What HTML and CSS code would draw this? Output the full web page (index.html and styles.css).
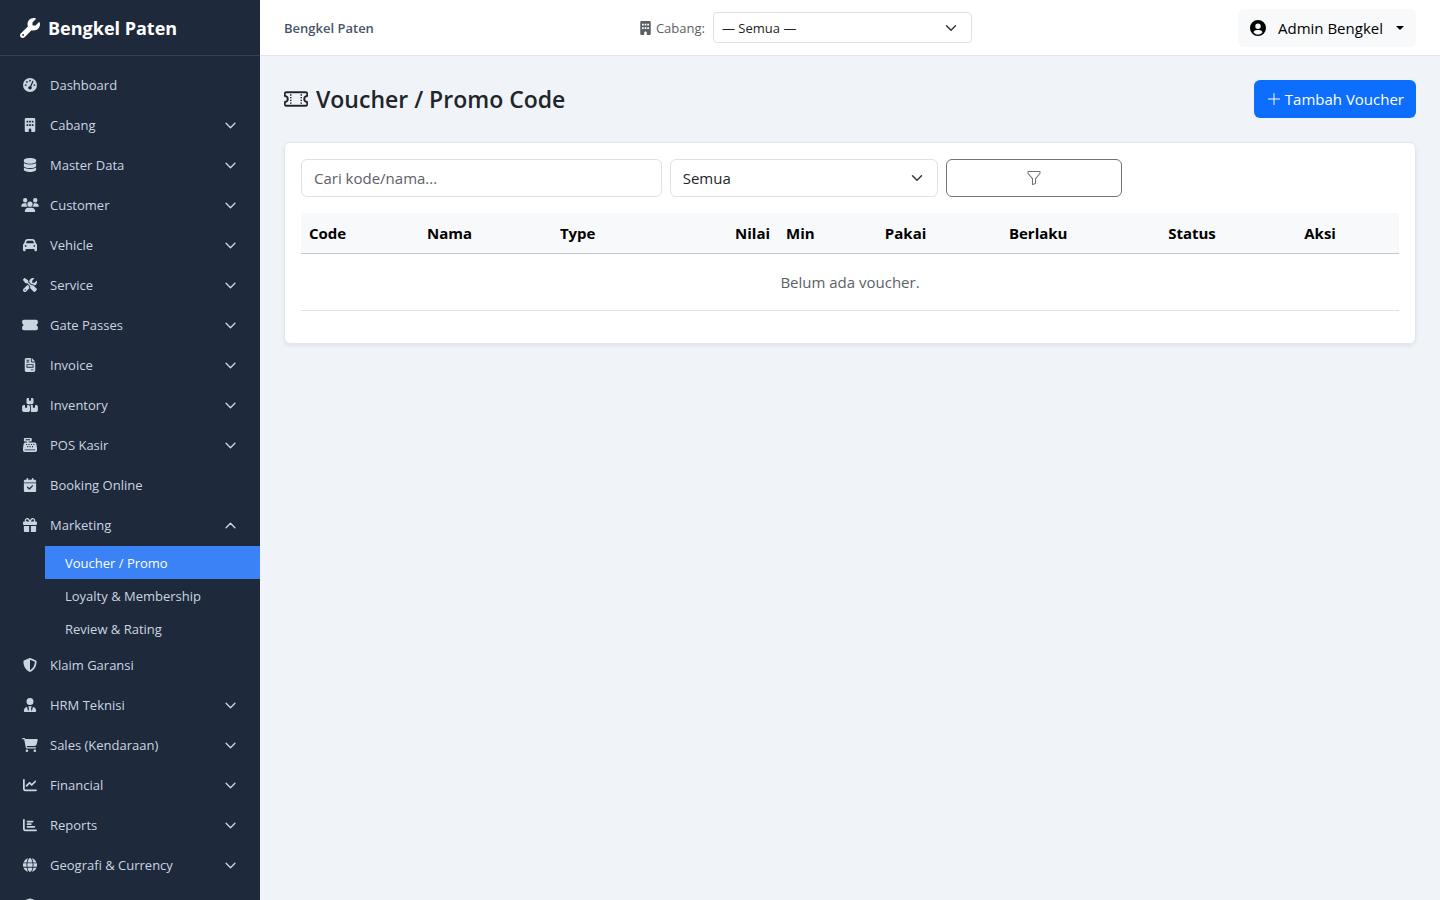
FILE: index.html
```html
<!DOCTYPE html>
<html lang="id">
<head>
    <meta charset="UTF-8">
    <meta name="viewport" content="width=device-width, initial-scale=1.0">
    <title>Voucher / Promo Code - Bengkel Paten</title>
    <link rel="stylesheet" href="styles.css">
</head>
<body>
    <!-- Ikon yang dipakai berulang -->
    <svg class="sprite" aria-hidden="true">
        <symbol id="chevron" viewBox="0 0 16 16">
            <path d="M1.6 4.8L8 11.2l6.4-6.4" fill="none" stroke="currentColor" stroke-width="2" stroke-linecap="round" stroke-linejoin="round"/>
        </symbol>
        <symbol id="building" viewBox="0 0 384 512">
            <path fill-rule="evenodd" d="M48 0C21 0 0 21 0 48V464c0 27 21 48 48 48h96V432c0-27 21-48 48-48s48 21 48 48v80h96c27 0 48-21 48-48V48c0-27-21-48-48-48zM64 96h64v64H64zM160 96h64v64h-64zM256 96h64v64h-64zM64 224h64v64H64zM160 224h64v64h-64zM256 224h64v64h-64z"/>
        </symbol>
    </svg>

    <div class="layout">
        <aside class="sidebar">
            <a href="#" class="brand">
                <svg class="brand-icon" viewBox="0 0 512 512"><path d="M352 320c88.400 0 160-71.600 160-160c0-15.300-2.200-30.100-6.200-44.200c-3.100-10.800-16.400-13.200-24.300-5.300l-76.800 76.800c-3 3-7.100 4.700-11.300 4.700H336c-8.800 0-16-7.200-16-16V118.600c0-4.200 1.700-8.300 4.700-11.300l76.800-76.800c7.900-7.900 5.400-21.200-5.300-24.300C382.100 2.200 367.300 0 352 0C263.600 0 192 71.600 192 160c0 19.100 3.400 37.500 9.500 54.500L19.900 396.100C7.200 408.800 0 426.100 0 444.100C0 481.600 30.400 512 67.900 512c18 0 35.300-7.200 48-19.900L297.500 310.500c17 6.200 35.400 9.500 54.500 9.500zM80 408a24 24 0 1 1 0 48 24 24 0 1 1 0-48z"/></svg>
                Bengkel Paten
            </a>
            <nav class="menu">
                <a href="#" class="menu-item">
                    <svg class="menu-icon" viewBox="0 0 512 512"><path fill-rule="evenodd" d="M256 0a256 256 0 1 1 0 512A256 256 0 1 1 256 0zM256 64a32 32 0 1 0 0 64 32 32 0 1 0 0-64zM144 112a32 32 0 1 0 0 64 32 32 0 1 0 0-64zM96 224a32 32 0 1 0 0 64 32 32 0 1 0 0-64zM416 224a32 32 0 1 0 0 64 32 32 0 1 0 0-64zM382 137c5-12 0-26-12-31s-26 0-31 12L263 288c-38 4-71 30-71 72 0 35 29 64 64 64s64-29 64-64c0-19-6-37-18-49z"/></svg>
                    <span>Dashboard</span>
                </a>
                <a href="#" class="menu-item">
                    <svg class="menu-icon"><use href="#building"/></svg>
                    <span>Cabang</span>
                    <svg class="arrow"><use href="#chevron"/></svg>
                </a>
                <a href="#" class="menu-item">
                    <svg class="menu-icon" viewBox="0 0 448 512"><path d="M448 80v48c0 44.200-100.300 80-224 80S0 172.200 0 128V80C0 35.800 100.300 0 224 0S448 35.800 448 80zM393.200 214.700c20.800-7.400 39.900-16.900 54.800-28.600V288c0 44.200-100.300 80-224 80S0 332.200 0 288V186.100c14.900 11.800 34 21.200 54.800 28.600C99.700 230.700 159.500 240 224 240s124.300-9.300 169.200-25.300zM0 346.100c14.900 11.800 34 21.200 54.800 28.600C99.700 390.700 159.500 400 224 400s124.300-9.300 169.200-25.300c20.800-7.400 39.900-16.900 54.800-28.600V432c0 44.200-100.300 80-224 80S0 476.200 0 432V346.100z"/></svg>
                    <span>Master Data</span>
                    <svg class="arrow"><use href="#chevron"/></svg>
                </a>
                <a href="#" class="menu-item">
                    <svg class="menu-icon" viewBox="0 0 640 512"><path d="M144 0a80 80 0 1 1 0 160A80 80 0 1 1 144 0zM512 0a80 80 0 1 1 0 160A80 80 0 1 1 512 0zM0 298.700C0 239.800 47.800 192 106.700 192h42.700c15.900 0 31 3.500 44.600 9.700c-1.300 7.200-1.900 14.700-1.900 22.300c0 38.200 16.800 72.500 43.300 96H21.300C9.600 320 0 310.400 0 298.700zM405.300 320c26.600-23.500 43.300-57.800 43.300-96c0-7.600-.7-15-1.900-22.300c13.600-6.300 28.700-9.700 44.600-9.700h42.700C592.200 192 640 239.800 640 298.700c0 11.800-9.600 21.300-21.300 21.300H405.300zM224 224a96 96 0 1 1 192 0 96 96 0 1 1-192 0zM128 485.300C128 411.700 187.700 352 261.300 352H378.700C452.300 352 512 411.700 512 485.300c0 14.700-11.900 26.700-26.700 26.700H154.700c-14.700 0-26.700-11.900-26.700-26.700z"/></svg>
                    <span>Customer</span>
                    <svg class="arrow"><use href="#chevron"/></svg>
                </a>
                <a href="#" class="menu-item">
                    <svg class="menu-icon" viewBox="0 0 512 512"><path d="M135.200 117.400L109.100 192H402.900l-26.100-74.600C372.300 104.600 360.200 96 346.600 96H165.400c-13.600 0-25.700 8.600-30.200 21.400zM39.600 196.800L74.800 96.300C88.300 57.800 124.600 32 165.400 32H346.600c40.800 0 77.100 25.800 90.600 64.300l35.200 100.500c23.200 9.600 39.600 32.500 39.600 59.200V448c0 17.700-14.300 32-32 32H448c-17.700 0-32-14.300-32-32V400H96v48c0 17.700-14.300 32-32 32H32c-17.700 0-32-14.300-32-32V256c0-26.700 16.400-49.600 39.600-59.200zM128 288a32 32 0 1 0-64 0 32 32 0 1 0 64 0zm288 32a32 32 0 1 0 0-64 32 32 0 1 0 0 64z"/></svg>
                    <span>Vehicle</span>
                    <svg class="arrow"><use href="#chevron"/></svg>
                </a>
                <a href="#" class="menu-item">
                    <svg class="menu-icon" viewBox="0 0 512 512"><path d="M78.600 5C69.100-2.400 55.600-1.500 47 7L7 47c-8.500 8.500-9.400 22-2.100 31.600l80 104c4.500 5.900 11.600 9.400 19 9.400h54.100l109 109c-14.700 29-10 65.400 14.300 89.600l112 112c12.500 12.500 32.800 12.500 45.300 0l64-64c12.500-12.500 12.500-32.800 0-45.300l-112-112c-24.200-24.200-60.600-29-89.600-14.300l-109-109V104c0-7.500-3.500-14.500-9.400-19L78.600 5zM19.900 396.100C7.200 408.800 0 426.100 0 444.100C0 481.600 30.400 512 67.900 512c18 0 35.300-7.200 48-19.900L233.700 374.300c-7.800-20.900-9-43.600-3.600-65.100l-61.700-61.700L19.900 396.100zM512 144c0-10.500-1.100-20.700-3.200-30.500c-2.400-11.200-16.100-14.100-24.200-6l-63.900 63.900c-3 3-7.100 4.700-11.300 4.700H352c-8.800 0-16-7.200-16-16V102.600c0-4.200 1.700-8.300 4.700-11.300l63.900-63.900c8.100-8.100 5.200-21.800-6-24.200C388.700 1.100 378.500 0 368 0C288.500 0 224 64.500 224 144l0 .8 85.300 85.300c36-9.100 75.800 .5 104 28.700L429 274.500c49-23 83-72.800 83-130.500zM56 432a24 24 0 1 1 48 0 24 24 0 1 1-48 0z"/></svg>
                    <span>Service</span>
                    <svg class="arrow"><use href="#chevron"/></svg>
                </a>
                <a href="#" class="menu-item">
                    <svg class="menu-icon" viewBox="0 0 576 512"><path d="M64 64C29 64 0 93 0 128v64c0 9 7 16 15 18 19 7 33 25 33 46s-14 39-33 46c-8 2-15 9-15 18v64c0 35 29 64 64 64H512c35 0 64-29 64-64v-64c0-9-7-16-15-18-19-7-33-25-33-46s14-39 33-46c8-2 15-9 15-18v-64c0-35-29-64-64-64z"/></svg>
                    <span>Gate Passes</span>
                    <svg class="arrow"><use href="#chevron"/></svg>
                </a>
                <a href="#" class="menu-item">
                    <svg class="menu-icon" viewBox="0 0 384 512"><path fill-rule="evenodd" d="M64 0C29 0 0 29 0 64V448c0 35 29 64 64 64H320c35 0 64-29 64-64V160H256c-18 0-32-14-32-32V0zM256 0V128H384zM64 64h96v32H64zM64 128h96v32H64zM64 224H320v128H64zM96 256v64H288v-64zM224 416h96v32h-96z"/></svg>
                    <span>Invoice</span>
                    <svg class="arrow"><use href="#chevron"/></svg>
                </a>
                <a href="#" class="menu-item">
                    <svg class="menu-icon" viewBox="0 0 576 512"><path d="M248 0H208c-27 0-48 21-48 48V160c0 35 29 64 64 64H352c35 0 64-29 64-64V48c0-27-21-48-48-48H328V80c0 9-7 16-16 16H264c-9 0-16-7-16-16zM64 256c-35 0-64 29-64 64V448c0 35 29 64 64 64H224c35 0 64-29 64-64V320c0-35-29-64-64-64H184v80c0 9-7 16-16 16H120c-9 0-16-7-16-16V256zM352 512H512c35 0 64-29 64-64V320c0-35-29-64-64-64H472v80c0 9-7 16-16 16H408c-9 0-16-7-16-16V256H352c-15 0-29 5-40 14 5 15 8 32 8 50V448c0 18-3 35-8 50 11 9 25 14 40 14z"/></svg>
                    <span>Inventory</span>
                    <svg class="arrow"><use href="#chevron"/></svg>
                </a>
                <a href="#" class="menu-item">
                    <svg class="menu-icon" viewBox="0 0 512 512"><path fill-rule="evenodd" d="M64 0C46 0 32 14 32 32V96c0 18 14 32 32 32h80v32H87c-31 0-58 23-63 54L1 364c-1 6-1 11-1 17v67c0 35 29 64 64 64H448c35 0 64-29 64-64v-67c0-6 0-11-1-17L488 214c-5-31-32-54-63-54H208v-32h80c18 0 32-14 32-32V32c0-18-14-32-32-32zM96 48H256v32H96zM64 416H448v32H64zM112 216h40v40h-40zM200 216h40v40h-40zM288 216h40v40h-40zM376 216h40v40h-40zM152 296h40v40h-40zM240 296h40v40h-40zM328 296h40v40h-40z"/></svg>
                    <span>POS Kasir</span>
                    <svg class="arrow"><use href="#chevron"/></svg>
                </a>
                <a href="#" class="menu-item">
                    <svg class="menu-icon" viewBox="0 0 448 512"><path fill-rule="evenodd" d="M128 0c18 0 32 14 32 32V64H288V32c0-18 14-32 32-32s32 14 32 32V64h48c27 0 48 21 48 48v48H0V112C0 85 21 64 48 64H96V32c0-18 14-32 32-32zM0 192H448V464c0 27-21 48-48 48H48c-27 0-48-21-48-48zM329 305c9-9 9-25 0-34s-25-9-34 0l-95 95-47-47c-9-9-25-9-34 0s-9 25 0 34l64 64c9 9 25 9 34 0z"/></svg>
                    <span>Booking Online</span>
                </a>
                <a href="#" class="menu-item" aria-expanded="true">
                    <svg class="menu-icon" viewBox="0 0 512 512"><path d="M190.500 68.800L225.300 128H152c-22.100 0-40-17.900-40-40s17.900-40 40-40h2.200c14.900 0 28.800 7.900 36.300 20.800zM64 88c0 14.400 3.500 28 9.600 40H32c-17.700 0-32 14.300-32 32v64c0 17.700 14.300 32 32 32H480c17.700 0 32-14.300 32-32V160c0-17.700-14.300-32-32-32H438.400c6.100-12 9.600-25.600 9.600-40c0-48.600-39.400-88-88-88h-2.200c-31.900 0-61.500 16.900-77.700 44.400L256 85.500l-24.100-41C215.700 16.900 186.100 0 154.200 0H152C103.400 0 64 39.400 64 88zm336 0c0 22.100-17.900 40-40 40H286.700l34.800-59.200C329.100 55.900 342.900 48 357.800 48H360c22.100 0 40 17.900 40 40zM32 288V464c0 26.500 21.500 48 48 48H224V288H32zM288 512H432c26.500 0 48-21.500 48-48V288H288V512z"/></svg>
                    <span>Marketing</span>
                    <svg class="arrow open"><use href="#chevron"/></svg>
                </a>
                <div class="submenu">
                    <a href="#" class="submenu-item active">Voucher / Promo</a>
                    <a href="#" class="submenu-item">Loyalty &amp; Membership</a>
                    <a href="#" class="submenu-item">Review &amp; Rating</a>
                </div>
                <a href="#" class="menu-item">
                    <svg class="menu-icon" viewBox="0 0 512 512"><path d="M256 0c4.600 0 9.200 1 13.400 2.900L457.700 82.800c22 9.300 38.400 31 38.300 57.200c-.5 99.200-41.300 280.700-213.600 363.200c-16.700 8-36.100 8-52.800 0C57.300 420.700 16.500 239.200 16 140c-.1-26.200 16.300-47.900 38.300-57.200L242.700 2.900C246.800 1 251.400 0 256 0zm0 66.800V444.800C394 378 431.100 230.100 432 141.400L256 66.800z"/></svg>
                    <span>Klaim Garansi</span>
                </a>
                <a href="#" class="menu-item">
                    <svg class="menu-icon" viewBox="0 0 448 512"><path d="M224 0a128 128 0 1 1 0 256A128 128 0 1 1 224 0zM178 304h92c12 0 20 13 14 24l-26 44 32 118 36-146c2-9 10-14 18-12 60 14 104 69 104 134v16c0 17-13 30-30 30H30c-17 0-30-13-30-30v-16c0-65 44-120 104-134 8-2 16 3 18 12l36 146 32-118-26-44c-6-11 2-24 14-24z"/></svg>
                    <span>HRM Teknisi</span>
                    <svg class="arrow"><use href="#chevron"/></svg>
                </a>
                <a href="#" class="menu-item">
                    <svg class="menu-icon" viewBox="0 0 576 512"><path d="M0 24C0 10.700 10.700 0 24 0H69.500c22 0 41.500 12.800 50.600 32h411c26.300 0 45.500 25 38.600 50.400l-41 152.300c-8.500 31.400-37 53.300-69.500 53.300H170.700l5.400 28.500c2.200 11.300 12.100 19.500 23.600 19.500H488c13.300 0 24 10.700 24 24s-10.700 24-24 24H199.700c-34.600 0-64.300-24.600-70.700-58.500L77.400 54.500c-.7-3.800-4-6.500-7.900-6.500H24C10.700 48 0 37.300 0 24zM128 464a48 48 0 1 1 96 0 48 48 0 1 1-96 0zm336-48a48 48 0 1 1 0 96 48 48 0 1 1 0-96z"/></svg>
                    <span>Sales (Kendaraan)</span>
                    <svg class="arrow"><use href="#chevron"/></svg>
                </a>
                <a href="#" class="menu-item">
                    <svg class="menu-icon" viewBox="0 0 512 512"><path d="M64 64c0-17.700-14.300-32-32-32S0 46.300 0 64V400c0 44.200 35.800 80 80 80H480c17.700 0 32-14.300 32-32s-14.300-32-32-32H80c-8.800 0-16-7.200-16-16V64zm406.600 86.600c12.500-12.500 12.500-32.800 0-45.300s-32.800-12.500-45.300 0L320 210.700l-57.400-57.400c-12.500-12.500-32.800-12.500-45.300 0l-112 112c-12.500 12.500-12.500 32.800 0 45.300s32.800 12.500 45.300 0L240 221.300l57.400 57.400c12.500 12.500 32.800 12.500 45.300 0l128-128z"/></svg>
                    <span>Financial</span>
                    <svg class="arrow"><use href="#chevron"/></svg>
                </a>
                <a href="#" class="menu-item">
                    <svg class="menu-icon" viewBox="0 0 512 512"><path d="M64 64c0-17.700-14.300-32-32-32S0 46.300 0 64V400c0 44.200 35.800 80 80 80H480c17.700 0 32-14.300 32-32s-14.300-32-32-32H80c-8.800 0-16-7.200-16-16V64zM128 128c0-17.700 14.300-32 32-32H352c17.700 0 32 14.300 32 32s-14.300 32-32 32H160c-17.700 0-32-14.300-32-32zm32 64H288c17.700 0 32 14.300 32 32s-14.300 32-32 32H160c-17.700 0-32-14.300-32-32s14.300-32 32-32zm0 96H416c17.700 0 32 14.300 32 32s-14.300 32-32 32H160c-17.700 0-32-14.300-32-32s14.300-32 32-32z"/></svg>
                    <span>Reports</span>
                    <svg class="arrow"><use href="#chevron"/></svg>
                </a>
                <a href="#" class="menu-item">
                    <svg class="menu-icon" viewBox="0 0 512 512"><path d="M352 256c0 22-1 44-3 64H163c-2-20-3-42-3-64s1-44 3-64h186c2 20 3 42 3 64zM381 192h123c5 20 8 42 8 64s-3 44-8 64H381c2-21 3-42 3-64s-1-43-3-64zM494 160H377C367 96 347 43 322 9c78 20 142 77 172 151zM345 160H167c6-36 16-68 27-95 11-23 23-40 34-51C239 3 249 0 256 0s17 3 28 14c11 11 23 28 34 51 11 27 21 59 27 95zM135 160H18C48 86 112 29 190 9c-25 34-45 87-55 151zM8 192h123c-2 21-3 42-3 64s1 43 3 64H8c-5-20-8-42-8-64s3-44 8-64zM194 447c-11-27-21-59-27-95h178c-6 36-16 68-27 95-11 23-23 40-34 51-11 11-21 14-28 14s-17-3-28-14c-11-11-23-28-34-51zM135 352c10 64 30 117 55 151C112 483 48 426 18 352zM494 352c-30 74-94 131-172 151 25-34 45-87 55-151z"/></svg>
                    <span>Geografi &amp; Currency</span>
                    <svg class="arrow"><use href="#chevron"/></svg>
                </a>
                <a href="#" class="menu-item">
                    <svg class="menu-icon" viewBox="0 0 512 512"><circle cx="256" cy="256" r="240"/></svg>
                </a>
            </nav>
        </aside>

        <div class="main">
            <header class="topbar">
                <strong class="topbar-title">Bengkel Paten</strong>
                <form class="branch">
                    <label for="branch">
                        <svg class="branch-icon"><use href="#building"/></svg>
                        Cabang:
                    </label>
                    <select id="branch" class="select select-sm">
                        <option>— Semua —</option>
                    </select>
                </form>
                <button type="button" class="user-button">
                    <svg class="user-icon" viewBox="0 0 512 512"><path fill-rule="evenodd" d="M256 0a256 256 0 1 1 0 512A256 256 0 1 1 256 0zM256 112a88 88 0 1 0 0 176 88 88 0 1 0 0-176zM111 389c35 45 87 75 145 75s110-30 145-75c-20-42-62-69-109-69h-72c-47 0-89 27-109 69z"/></svg>
                    Admin Bengkel
                    <span class="caret"></span>
                </button>
            </header>

            <main class="content">
                <div class="page-head">
                    <h1>
                        <svg class="title-icon" viewBox="0 0 16 16"><path d="M4 4.850v.900h1v-.900zm7 0v.900h1v-.900zm-7 1.800v.900h1v-.900zm7 0v.900h1v-.900zm-7 1.800v.900h1v-.900zm7 0v.900h1v-.900zm-7 1.800v.900h1v-.900zm7 0v.900h1v-.900z"/><path stroke="currentColor" stroke-width=".3" d="M1.500 3A1.500 1.500 0 0 0 0 4.500V6a.5.5 0 0 0 .5.5 1.500 1.500 0 1 1 0 3 .5.5 0 0 0-.5.5v1.500A1.500 1.500 0 0 0 1.500 13h13a1.500 1.500 0 0 0 1.500-1.500V10a.5.5 0 0 0-.5-.5 1.500 1.500 0 0 1 0-3A.5.5 0 0 0 16 6V4.500A1.500 1.500 0 0 0 14.500 3zM1 4.500a.5.5 0 0 1 .5-.5h13a.5.5 0 0 1 .5.5v1.050a2.500 2.500 0 0 0 0 4.900v1.050a.5.5 0 0 1-.5.5h-13a.5.5 0 0 1-.5-.5v-1.050a2.500 2.500 0 0 0 0-4.900z"/></svg>
                        Voucher / Promo Code
                    </h1>
                    <button type="button" class="btn-primary">
                        <svg class="plus-icon" viewBox="0 0 16 16"><path d="M8 2a.5.5 0 0 1 .5.5v5h5a.5.5 0 0 1 0 1h-5v5a.5.5 0 0 1-1 0v-5h-5a.5.5 0 0 1 0-1h5v-5A.5.5 0 0 1 8 2z"/></svg>
                        Tambah Voucher
                    </button>
                </div>

                <section class="card">
                    <form class="filters">
                        <input type="text" class="input" placeholder="Cari kode/nama..." aria-label="Cari kode/nama">
                        <select class="select" aria-label="Status">
                            <option>Semua</option>
                        </select>
                        <button type="button" class="btn-filter" aria-label="Filter">
                            <svg class="filter-icon" viewBox="0 0 16 16"><path d="M1.500 1.500A.5.5 0 0 1 2 1h12a.5.5 0 0 1 .5.5v2a.5.5 0 0 1-.128.334L10 8.692V13.500a.5.5 0 0 1-.342.474l-3 1A.5.5 0 0 1 6 14.500V8.692L1.628 3.834A.5.5 0 0 1 1.500 3.500zm1 .5v1.308l4.372 4.858A.5.5 0 0 1 7 8.500v5.306l2-.666V8.500a.5.5 0 0 1 .128-.334L13.500 3.308V2z"/></svg>
                        </button>
                    </form>

                    <table class="table">
                        <thead>
                            <tr>
                                <th class="col-code">Code</th>
                                <th class="col-name">Nama</th>
                                <th class="col-type">Type</th>
                                <th class="col-value">Nilai</th>
                                <th class="col-min">Min</th>
                                <th class="col-used">Pakai</th>
                                <th class="col-valid">Berlaku</th>
                                <th class="col-status">Status</th>
                                <th>Aksi</th>
                            </tr>
                        </thead>
                        <tbody>
                            <tr>
                                <td colspan="9" class="empty">Belum ada voucher.</td>
                            </tr>
                        </tbody>
                    </table>
                </section>
            </main>
        </div>
    </div>
</body>
</html>
```
FILE: styles.css
```css
* {
    box-sizing: border-box;
}

body {
    margin: 0;
    font-family: "Open Sans", "Noto Sans", sans-serif;
    font-size: 15px;
    line-height: 24px;
    color: #212529;
    background-color: #f0f4f9;
}

a {
    color: inherit;
    text-decoration: none;
}

svg {
    fill: currentColor;
    flex-shrink: 0;
}

button,
input,
select {
    font-family: inherit;
    font-size: 15px;
    line-height: 24px;
    margin: 0;
}

.sprite {
    display: none;
}

.layout {
    display: flex;
    min-height: 100vh;
}

/* Sidebar */
.sidebar {
    width: 260px;
    height: 100vh;
    flex-shrink: 0;
    position: sticky;
    top: 0;
    overflow: hidden;
    background-color: #1e293b;
    color: #cbd5e1;
}

.brand {
    display: flex;
    align-items: center;
    gap: 8px;
    height: 56px;
    padding: 0 20px;
    border-bottom: 1px solid #334155;
    color: #fff;
    font-size: 18px;
    font-weight: 700;
}

.brand-icon {
    width: 20px;
    height: 20px;
}

.menu {
    padding: 9px 0;
}

.menu-item {
    display: flex;
    align-items: center;
    gap: 10px;
    height: 40px;
    padding: 0 24px 0 20px;
    font-size: 13px;
}

.menu-icon {
    width: 20px;
    height: 14px;
}

.arrow {
    width: 11px;
    height: 11px;
    margin-left: auto;
}

.arrow.open {
    transform: rotate(180deg);
}

.submenu {
    padding: 1px 0 0 45px;
}

.submenu-item {
    display: block;
    padding: 5px 20px 4px;
    font-size: 13px;
}

.menu-item:hover,
.submenu-item:hover {
    color: #fff;
}

.submenu-item.active {
    background-color: #3b82f6;
    color: #fff;
}

/* Konten utama */
.main {
    flex: 1;
    min-width: 0;
}

.topbar {
    display: flex;
    align-items: center;
    justify-content: space-between;
    height: 56px;
    padding: 0 24px;
    background-color: #fff;
    border-bottom: 1px solid #e2e8f0;
}

.topbar-title {
    font-size: 13px;
    font-weight: 600;
    color: #475569;
}

.branch {
    display: flex;
    align-items: center;
    gap: 8px;
}

.branch label {
    display: flex;
    align-items: center;
    gap: 5px;
    font-size: 13px;
    color: #5c6166;
}

.branch-icon {
    width: 11px;
    height: 14px;
}

.input,
.select {
    width: 100%;
    height: 38px;
    padding: 0 12px;
    border: 1px solid #dee2e6;
    border-radius: 6px;
    background-color: #fff;
    color: #212529;
}

.input::placeholder {
    color: #5c6166;
}

.select {
    appearance: none;
    background-image: url("data:image/svg+xml,%3csvg xmlns='http://www.w3.org/2000/svg' viewBox='0 0 16 16'%3e%3cpath fill='none' stroke='%23343a40' stroke-linecap='round' stroke-linejoin='round' stroke-width='2' d='m2 5 6 6 6-6'/%3e%3c/svg%3e");
    background-repeat: no-repeat;
    background-position: right 14px center;
    background-size: 12px 12px;
}

.select-sm {
    width: 259px;
    height: 31px;
    padding: 0 8px;
    border-radius: 4px;
    font-size: 13px;
}

.user-button {
    display: flex;
    align-items: center;
    height: 38px;
    padding: 0 12px;
    border: 0;
    border-radius: 6px;
    background-color: #f8f9fa;
    color: #000;
}

.user-icon {
    width: 16px;
    height: 16px;
    margin-right: 12px;
}

.caret {
    margin-left: 13px;
    border-top: 4px solid;
    border-right: 4px solid transparent;
    border-left: 4px solid transparent;
}

.content {
    padding: 24px;
}

.page-head {
    display: flex;
    align-items: center;
    justify-content: space-between;
    margin-bottom: 24px;
}

.page-head h1 {
    display: flex;
    align-items: center;
    gap: 8px;
    margin: 0;
    font-size: 23px;
    font-weight: 600;
}

.title-icon {
    width: 24px;
    height: 24px;
}

.btn-primary {
    display: flex;
    align-items: center;
    gap: 3px;
    height: 38px;
    padding: 0 12px;
    border: 0;
    border-radius: 6px;
    background-color: #0d6efd;
    color: #fff;
}

.plus-icon,
.filter-icon {
    width: 16px;
    height: 16px;
}

.card {
    padding: 16px;
    border: 1px solid #e2e8f0;
    border-radius: 6px;
    background-color: #fff;
    box-shadow: 0 2px 4px rgba(0, 0, 0, 0.07);
}

/* Filter */
.filters {
    display: grid;
    grid-template-columns: repeat(12, 1fr);
    gap: 8px;
    margin-bottom: 16px;
}

.filters .input {
    grid-column: span 4;
}

.filters .select {
    grid-column: span 3;
}

.btn-filter {
    grid-column: span 2;
    display: flex;
    align-items: center;
    justify-content: center;
    height: 38px;
    border: 1px solid #6c757d;
    border-radius: 6px;
    background-color: #fff;
    color: #6c757d;
}

/* Tabel voucher */
.table {
    width: 100%;
    margin-bottom: 16px;
    border-collapse: separate;
    border-spacing: 0;
    table-layout: fixed;
}

.table th {
    padding: 8px;
    border-bottom: 1px solid #c6c7c8;
    background-color: #f8f9fa;
    color: #000;
    font-size: 15px;
    font-weight: 700;
    text-align: left;
}

.table .col-code { width: 10.75%; }
.table .col-name { width: 12.1%; }
.table .col-type { width: 10.2%; }
.table .col-value { width: 10.4%; text-align: right; }
.table .col-min { width: 9%; }
.table .col-used { width: 11.3%; }
.table .col-valid { width: 14.5%; }
.table .col-status { width: 12.4%; }

.table .empty {
    padding: 16px 8px;
    border-bottom: 1px solid #dee2e6;
    color: #5c6166;
    text-align: center;
}
```
